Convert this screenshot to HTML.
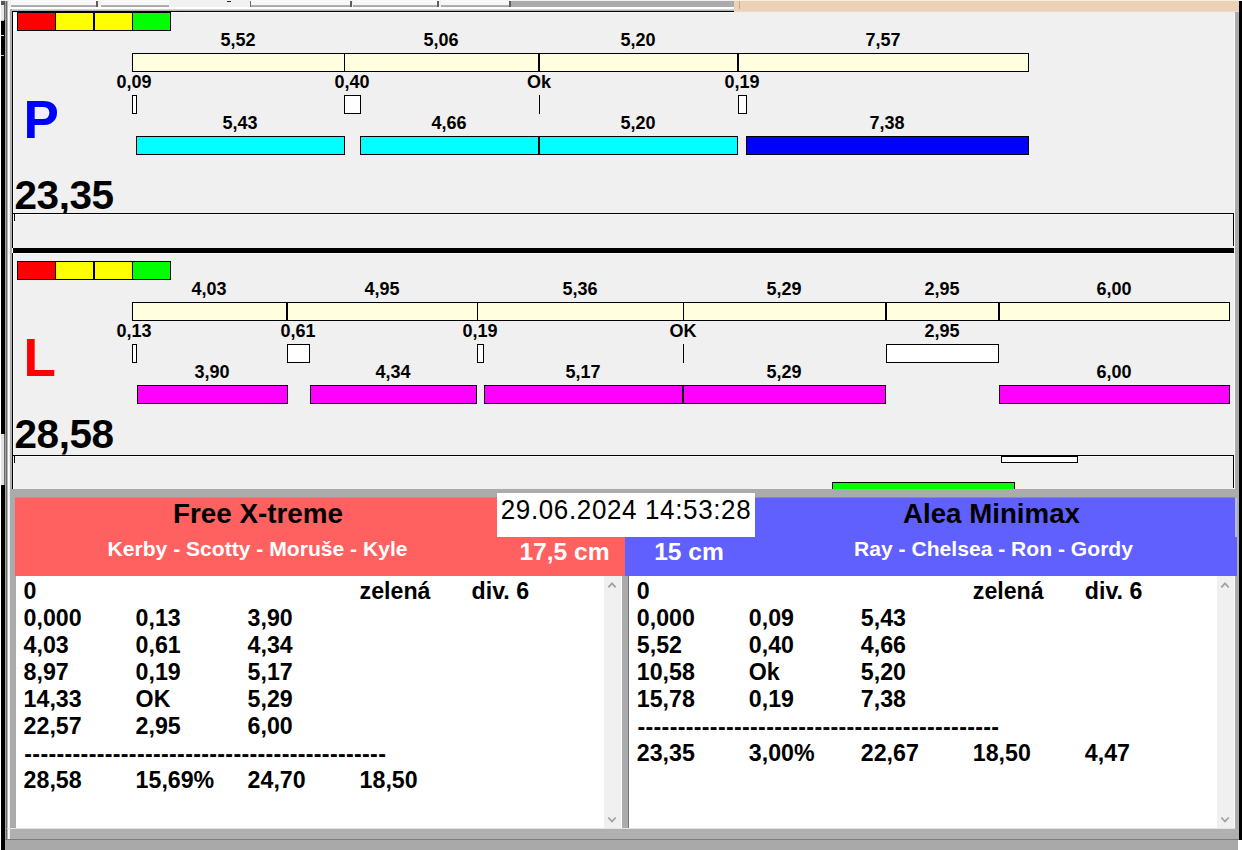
<!DOCTYPE html>
<html><head><meta charset="utf-8"><title>Výsledky</title>
<style>
html,body{margin:0;padding:0;}
body{width:1242px;height:850px;position:relative;overflow:hidden;background:#f0f0f0;font-family:"Liberation Sans", Arial, sans-serif;}
div{box-sizing:content-box;}
</style></head><body>
<div style="position:absolute;left:0px;top:0px;width:1242px;height:850px;background:#f0f0f0;"></div>
<div style="position:absolute;left:0px;top:0px;width:1242px;height:9px;background:#f1f1f1;"></div>
<div style="position:absolute;left:11px;top:0px;width:87px;height:5px;background:#f7f7f7;"></div>
<div style="position:absolute;left:11px;top:1px;width:87px;height:1px;background:#fdfdfd;"></div>
<div style="position:absolute;left:11px;top:5px;width:87px;height:1px;background:#b2b2b2;"></div>
<div style="position:absolute;left:11px;top:6px;width:87px;height:1px;background:#a8a8a8;"></div>
<div style="position:absolute;left:96px;top:1px;width:2px;height:6px;background:#5e5e5e;"></div>
<div style="position:absolute;left:101px;top:0px;width:68px;height:5px;background:#f7f7f7;"></div>
<div style="position:absolute;left:101px;top:1px;width:68px;height:1px;background:#fdfdfd;"></div>
<div style="position:absolute;left:101px;top:5px;width:68px;height:1px;background:#b2b2b2;"></div>
<div style="position:absolute;left:101px;top:6px;width:68px;height:1px;background:#a8a8a8;"></div>
<div style="position:absolute;left:250px;top:0px;width:102px;height:5px;background:#f7f7f7;"></div>
<div style="position:absolute;left:250px;top:1px;width:102px;height:1px;background:#fdfdfd;"></div>
<div style="position:absolute;left:250px;top:5px;width:102px;height:1px;background:#b2b2b2;"></div>
<div style="position:absolute;left:250px;top:6px;width:102px;height:1px;background:#a8a8a8;"></div>
<div style="position:absolute;left:350px;top:1px;width:2px;height:6px;background:#5e5e5e;"></div>
<div style="position:absolute;left:353px;top:0px;width:86px;height:5px;background:#f7f7f7;"></div>
<div style="position:absolute;left:353px;top:1px;width:86px;height:1px;background:#fdfdfd;"></div>
<div style="position:absolute;left:353px;top:5px;width:86px;height:1px;background:#b2b2b2;"></div>
<div style="position:absolute;left:353px;top:6px;width:86px;height:1px;background:#a8a8a8;"></div>
<div style="position:absolute;left:437px;top:1px;width:2px;height:6px;background:#5e5e5e;"></div>
<div style="position:absolute;left:441px;top:0px;width:70px;height:5px;background:#f7f7f7;"></div>
<div style="position:absolute;left:441px;top:1px;width:70px;height:1px;background:#fdfdfd;"></div>
<div style="position:absolute;left:441px;top:5px;width:70px;height:1px;background:#b2b2b2;"></div>
<div style="position:absolute;left:441px;top:6px;width:70px;height:1px;background:#a8a8a8;"></div>
<div style="position:absolute;left:509px;top:1px;width:2px;height:6px;background:#5e5e5e;"></div>
<div style="position:absolute;left:250px;top:1px;width:1px;height:6px;background:#6e6e6e;"></div>
<div style="position:absolute;left:227px;top:1px;width:4px;height:1px;background:#222;"></div>
<div style="position:absolute;left:511px;top:1px;width:223px;height:6px;background:#ababab;"></div>
<div style="position:absolute;left:0px;top:7px;width:734px;height:2px;background:#ffffff;"></div>
<div style="position:absolute;left:10px;top:9px;width:724px;height:1px;background:#d2d2d2;"></div>
<div style="position:absolute;left:10px;top:10px;width:724px;height:1px;background:#b2b2b2;"></div>
<div style="position:absolute;left:734px;top:0;width:505px;height:14px;background:linear-gradient(to bottom,#fffef4 0px,#e6d2bc 1.5px,#eed2b6 4px,#efd0b2 7px,#e9d3be 11px,#f3ece6 12.5px,#f0f0f0 14px);"></div>
<div style="position:absolute;left:739px;top:1px;width:1px;height:8px;background:#c9a98b;"></div>
<div style="position:absolute;left:0px;top:0px;width:1px;height:850px;background:#ffffff;"></div>
<div style="position:absolute;left:1px;top:20px;width:4px;height:830px;background:#000;"></div>
<div style="position:absolute;left:1px;top:0px;width:4px;height:20px;background:#e8e8e8;"></div>
<div style="position:absolute;left:1px;top:1px;width:4px;height:4px;background:#555;"></div>
<div style="position:absolute;left:4px;top:5px;width:1px;height:15px;background:#6a6a6a;"></div>
<div style="position:absolute;left:1px;top:20px;width:3px;height:1px;background:#bbb;"></div>
<div style="position:absolute;left:1px;top:35px;width:3px;height:1px;background:#d8d8d8;"></div>
<div style="position:absolute;left:1px;top:55px;width:3px;height:1px;background:#c8c8c8;"></div>
<div style="position:absolute;left:1px;top:434px;width:3px;height:51px;background:#e2e2e2;"></div>
<div style="position:absolute;left:4px;top:434px;width:1px;height:51px;background:#6a6a6a;"></div>
<div style="position:absolute;left:5px;top:1px;width:1px;height:849px;background:#a0a0a0;"></div>
<div style="position:absolute;left:6px;top:1px;width:1px;height:849px;background:#6e6e6e;"></div>
<div style="position:absolute;left:7px;top:1px;width:1px;height:849px;background:#b4b4b4;"></div>
<div style="position:absolute;left:8px;top:7px;width:1px;height:833px;background:#fff;"></div>
<div style="position:absolute;left:9px;top:7px;width:1px;height:833px;background:#f0f0f0;"></div>
<div style="position:absolute;left:10px;top:9px;width:1px;height:480px;background:#ababab;"></div>
<div style="position:absolute;left:11px;top:9px;width:1px;height:480px;background:#b4b4b4;"></div>
<div style="position:absolute;left:13px;top:12px;width:1px;height:477px;background:#fbfbfb;"></div>
<div style="position:absolute;left:1234px;top:14px;width:1px;height:814px;background:#fff;"></div>
<div style="position:absolute;left:1235px;top:12px;width:4px;height:828px;background:#ababab;"></div>
<div style="position:absolute;left:1239px;top:1px;width:3px;height:839px;background:#000;"></div>
<div style="position:absolute;left:12px;top:11px;width:722px;height:1px;background:#000;"></div>
<div style="position:absolute;left:12px;top:11px;width:1px;height:237px;background:#000;"></div>
<div style="position:absolute;left:1233px;top:213px;width:1px;height:33px;background:#000;"></div>
<div style="position:absolute;left:13px;top:213px;width:1221px;height:1px;background:#000;"></div>
<div style="position:absolute;left:14px;top:214px;width:1px;height:7px;background:#000;"></div>
<div style="position:absolute;left:12px;top:248px;width:1px;height:5px;background:#fff;"></div>
<div style="position:absolute;left:13px;top:248px;width:1221px;height:5px;background:#000;"></div>
<div style="position:absolute;left:12px;top:253px;width:1px;height:236px;background:#000;"></div>
<div style="position:absolute;left:1233px;top:455px;width:1px;height:33px;background:#000;"></div>
<div style="position:absolute;left:13px;top:455px;width:1221px;height:1px;background:#000;"></div>
<div style="position:absolute;left:14px;top:456px;width:1px;height:7px;background:#000;"></div>
<div style="position:absolute;left:13px;top:13px;width:4px;height:18px;background:#fff;"></div>
<div style="position:absolute;left:17px;top:12px;width:154px;height:19px;background:#000;"></div>
<div style="position:absolute;left:18px;top:13px;width:37px;height:17px;background:#ff0000;"></div>
<div style="position:absolute;left:56px;top:13px;width:37px;height:17px;background:#ffff00;"></div>
<div style="position:absolute;left:95px;top:13px;width:37px;height:17px;background:#ffff00;"></div>
<div style="position:absolute;left:133px;top:13px;width:37px;height:17px;background:#00ff00;"></div>
<div style="position:absolute;left:132px;top:53px;width:211px;height:17px;background:#ffffe0;border:1px solid #000;"></div>
<div style="position:absolute;left:88.0px;width:300px;text-align:center;top:29px;font-size:18px;line-height:18px;color:#000;font-weight:bold;white-space:pre;line-height:22px;">5,52</div>
<div style="position:absolute;left:344px;top:53px;width:193px;height:17px;background:#ffffe0;border:1px solid #000;"></div>
<div style="position:absolute;left:291.0px;width:300px;text-align:center;top:29px;font-size:18px;line-height:18px;color:#000;font-weight:bold;white-space:pre;line-height:22px;">5,06</div>
<div style="position:absolute;left:539px;top:53px;width:197px;height:17px;background:#ffffe0;border:1px solid #000;"></div>
<div style="position:absolute;left:488.0px;width:300px;text-align:center;top:29px;font-size:18px;line-height:18px;color:#000;font-weight:bold;white-space:pre;line-height:22px;">5,20</div>
<div style="position:absolute;left:738px;top:53px;width:289px;height:17px;background:#ffffe0;border:1px solid #000;"></div>
<div style="position:absolute;left:733.0px;width:300px;text-align:center;top:29px;font-size:18px;line-height:18px;color:#000;font-weight:bold;white-space:pre;line-height:22px;">7,57</div>
<div style="position:absolute;left:132px;top:95px;width:3px;height:17px;background:#fff;border:1px solid #000;"></div>
<div style="position:absolute;left:-16.0px;width:300px;text-align:center;top:71px;font-size:18px;line-height:18px;color:#000;font-weight:bold;white-space:pre;line-height:22px;">0,09</div>
<div style="position:absolute;left:344px;top:95px;width:15px;height:17px;background:#fff;border:1px solid #000;"></div>
<div style="position:absolute;left:202.0px;width:300px;text-align:center;top:71px;font-size:18px;line-height:18px;color:#000;font-weight:bold;white-space:pre;line-height:22px;">0,40</div>
<div style="position:absolute;left:539px;top:95px;width:1px;height:19px;background:#000;"></div>
<div style="position:absolute;left:389.0px;width:300px;text-align:center;top:71px;font-size:18px;line-height:18px;color:#000;font-weight:bold;white-space:pre;line-height:22px;">Ok</div>
<div style="position:absolute;left:738px;top:95px;width:7px;height:17px;background:#fff;border:1px solid #000;"></div>
<div style="position:absolute;left:592.0px;width:300px;text-align:center;top:71px;font-size:18px;line-height:18px;color:#000;font-weight:bold;white-space:pre;line-height:22px;">0,19</div>
<div style="position:absolute;left:136px;top:136px;width:207px;height:17px;background:#00ffff;border:1px solid #000;"></div>
<div style="position:absolute;left:90.0px;width:300px;text-align:center;top:112px;font-size:18px;line-height:18px;color:#000;font-weight:bold;white-space:pre;line-height:22px;">5,43</div>
<div style="position:absolute;left:360px;top:136px;width:177px;height:17px;background:#00ffff;border:1px solid #000;"></div>
<div style="position:absolute;left:299.0px;width:300px;text-align:center;top:112px;font-size:18px;line-height:18px;color:#000;font-weight:bold;white-space:pre;line-height:22px;">4,66</div>
<div style="position:absolute;left:539px;top:136px;width:197px;height:17px;background:#00ffff;border:1px solid #000;"></div>
<div style="position:absolute;left:488.0px;width:300px;text-align:center;top:112px;font-size:18px;line-height:18px;color:#000;font-weight:bold;white-space:pre;line-height:22px;">5,20</div>
<div style="position:absolute;left:746px;top:136px;width:281px;height:17px;background:#0000ff;border:1px solid #000;"></div>
<div style="position:absolute;left:737.0px;width:300px;text-align:center;top:112px;font-size:18px;line-height:18px;color:#000;font-weight:bold;white-space:pre;line-height:22px;">7,38</div>
<div style="position:absolute;left:17px;top:261px;width:154px;height:19px;background:#000;"></div>
<div style="position:absolute;left:18px;top:262px;width:37px;height:17px;background:#ff0000;"></div>
<div style="position:absolute;left:56px;top:262px;width:37px;height:17px;background:#ffff00;"></div>
<div style="position:absolute;left:95px;top:262px;width:37px;height:17px;background:#ffff00;"></div>
<div style="position:absolute;left:133px;top:262px;width:37px;height:17px;background:#00ff00;"></div>
<div style="position:absolute;left:132px;top:302px;width:153px;height:17px;background:#ffffe0;border:1px solid #000;"></div>
<div style="position:absolute;left:59.0px;width:300px;text-align:center;top:278px;font-size:18px;line-height:18px;color:#000;font-weight:bold;white-space:pre;line-height:22px;">4,03</div>
<div style="position:absolute;left:287px;top:302px;width:189px;height:17px;background:#ffffe0;border:1px solid #000;"></div>
<div style="position:absolute;left:232.0px;width:300px;text-align:center;top:278px;font-size:18px;line-height:18px;color:#000;font-weight:bold;white-space:pre;line-height:22px;">4,95</div>
<div style="position:absolute;left:477px;top:302px;width:205px;height:17px;background:#ffffe0;border:1px solid #000;"></div>
<div style="position:absolute;left:430.0px;width:300px;text-align:center;top:278px;font-size:18px;line-height:18px;color:#000;font-weight:bold;white-space:pre;line-height:22px;">5,36</div>
<div style="position:absolute;left:683px;top:302px;width:201px;height:17px;background:#ffffe0;border:1px solid #000;"></div>
<div style="position:absolute;left:634.0px;width:300px;text-align:center;top:278px;font-size:18px;line-height:18px;color:#000;font-weight:bold;white-space:pre;line-height:22px;">5,29</div>
<div style="position:absolute;left:886px;top:302px;width:111px;height:17px;background:#ffffe0;border:1px solid #000;"></div>
<div style="position:absolute;left:792.0px;width:300px;text-align:center;top:278px;font-size:18px;line-height:18px;color:#000;font-weight:bold;white-space:pre;line-height:22px;">2,95</div>
<div style="position:absolute;left:999px;top:302px;width:229px;height:17px;background:#ffffe0;border:1px solid #000;"></div>
<div style="position:absolute;left:964.0px;width:300px;text-align:center;top:278px;font-size:18px;line-height:18px;color:#000;font-weight:bold;white-space:pre;line-height:22px;">6,00</div>
<div style="position:absolute;left:132px;top:344px;width:3px;height:17px;background:#fff;border:1px solid #000;"></div>
<div style="position:absolute;left:-16.0px;width:300px;text-align:center;top:320px;font-size:18px;line-height:18px;color:#000;font-weight:bold;white-space:pre;line-height:22px;">0,13</div>
<div style="position:absolute;left:287px;top:344px;width:21px;height:17px;background:#fff;border:1px solid #000;"></div>
<div style="position:absolute;left:148.0px;width:300px;text-align:center;top:320px;font-size:18px;line-height:18px;color:#000;font-weight:bold;white-space:pre;line-height:22px;">0,61</div>
<div style="position:absolute;left:477px;top:344px;width:5px;height:17px;background:#fff;border:1px solid #000;"></div>
<div style="position:absolute;left:330.0px;width:300px;text-align:center;top:320px;font-size:18px;line-height:18px;color:#000;font-weight:bold;white-space:pre;line-height:22px;">0,19</div>
<div style="position:absolute;left:683px;top:344px;width:1px;height:19px;background:#000;"></div>
<div style="position:absolute;left:533.0px;width:300px;text-align:center;top:320px;font-size:18px;line-height:18px;color:#000;font-weight:bold;white-space:pre;line-height:22px;">OK</div>
<div style="position:absolute;left:886px;top:344px;width:111px;height:17px;background:#fff;border:1px solid #000;"></div>
<div style="position:absolute;left:792.0px;width:300px;text-align:center;top:320px;font-size:18px;line-height:18px;color:#000;font-weight:bold;white-space:pre;line-height:22px;">2,95</div>
<div style="position:absolute;left:137px;top:385px;width:149px;height:17px;background:#ff00ff;border:1px solid #000;"></div>
<div style="position:absolute;left:62.0px;width:300px;text-align:center;top:361px;font-size:18px;line-height:18px;color:#000;font-weight:bold;white-space:pre;line-height:22px;">3,90</div>
<div style="position:absolute;left:310px;top:385px;width:165px;height:17px;background:#ff00ff;border:1px solid #000;"></div>
<div style="position:absolute;left:243.0px;width:300px;text-align:center;top:361px;font-size:18px;line-height:18px;color:#000;font-weight:bold;white-space:pre;line-height:22px;">4,34</div>
<div style="position:absolute;left:484px;top:385px;width:197px;height:17px;background:#ff00ff;border:1px solid #000;"></div>
<div style="position:absolute;left:433.0px;width:300px;text-align:center;top:361px;font-size:18px;line-height:18px;color:#000;font-weight:bold;white-space:pre;line-height:22px;">5,17</div>
<div style="position:absolute;left:683px;top:385px;width:201px;height:17px;background:#ff00ff;border:1px solid #000;"></div>
<div style="position:absolute;left:634.0px;width:300px;text-align:center;top:361px;font-size:18px;line-height:18px;color:#000;font-weight:bold;white-space:pre;line-height:22px;">5,29</div>
<div style="position:absolute;left:999px;top:385px;width:229px;height:17px;background:#ff00ff;border:1px solid #000;"></div>
<div style="position:absolute;left:964.0px;width:300px;text-align:center;top:361px;font-size:18px;line-height:18px;color:#000;font-weight:bold;white-space:pre;line-height:22px;">6,00</div>
<div style="position:absolute;left:23.5px;top:92px;font-size:53px;line-height:53px;color:#0000ff;font-weight:bold;white-space:pre;line-height:56px;">P</div>
<div style="position:absolute;left:23.5px;top:330px;font-size:53px;line-height:53px;color:#ff0000;font-weight:bold;white-space:pre;line-height:56px;">L</div>
<div style="position:absolute;left:14.5px;top:173px;font-size:40.5px;line-height:40.5px;color:#000;font-weight:bold;white-space:pre;line-height:44px;letter-spacing:-0.45px;">23,35</div>
<div style="position:absolute;left:14.5px;top:412px;font-size:40.5px;line-height:40.5px;color:#000;font-weight:bold;white-space:pre;line-height:44px;letter-spacing:-0.45px;">28,58</div>
<div style="position:absolute;left:14px;top:214px;width:1219px;height:33px;background:#f0f0f0;"></div>
<div style="position:absolute;left:14px;top:456px;width:1219px;height:33px;background:#f0f0f0;"></div>
<div style="position:absolute;left:15px;top:214px;width:1218px;height:1px;background:#fafafa;"></div>
<div style="position:absolute;left:15px;top:456px;width:1218px;height:1px;background:#fafafa;"></div>
<div style="position:absolute;left:14px;top:253px;width:1220px;height:1px;background:#fafafa;"></div>
<div style="position:absolute;left:171px;top:12px;width:563px;height:1px;background:#fafafa;"></div>
<div style="position:absolute;left:14px;top:214px;width:1px;height:7px;background:#000;"></div>
<div style="position:absolute;left:14px;top:456px;width:1px;height:7px;background:#000;"></div>
<div style="position:absolute;left:1001px;top:456px;width:75px;height:5px;background:#fff;border:1px solid #000;"></div>
<div style="position:absolute;left:832px;top:482px;width:181px;height:6px;background:#00ff00;border:1px solid #000;"></div>
<div style="position:absolute;left:10px;top:489px;width:1229px;height:9px;background:#ababab;"></div>
<div style="position:absolute;left:10px;top:498px;width:6px;height:342px;background:#ababab;"></div>
<div style="position:absolute;left:15px;top:498px;width:610px;height:78px;background:#ff6060;"></div>
<div style="position:absolute;left:625px;top:498px;width:610px;height:78px;background:#6060ff;"></div>
<div style="position:absolute;left:1235px;top:498px;width:2px;height:39px;background:#b9b9ea;"></div>
<div style="position:absolute;left:1235px;top:537px;width:2px;height:39px;background:#6060ff;"></div>
<div style="position:absolute;left:15px;top:497px;width:610px;height:1px;background:#d68585;"></div>
<div style="position:absolute;left:625px;top:497px;width:610px;height:1px;background:#8585d6;"></div>
<div style="position:absolute;left:497px;top:493px;width:258px;height:44px;background:#fff;"></div>
<div style="position:absolute;left:476.4px;width:300px;text-align:center;top:495px;font-size:27.2px;line-height:27.2px;color:#000;font-weight:normal;white-space:pre;line-height:30px;letter-spacing:0.68px;transform:scaleX(0.955);">29.06.2024 14:53:28</div>
<div style="position:absolute;left:108px;width:300px;text-align:center;top:498.5px;font-size:27.8px;line-height:27.8px;color:#000;font-weight:bold;white-space:pre;line-height:30px;">Free X-treme</div>
<div style="position:absolute;left:841.5px;width:300px;text-align:center;top:498.5px;font-size:27.7px;line-height:27.7px;color:#000;font-weight:bold;white-space:pre;line-height:30px;">Alea Minimax</div>
<div style="position:absolute;left:107.5px;width:300px;text-align:center;top:537px;font-size:21.1px;line-height:21.1px;color:#fff;font-weight:bold;white-space:pre;line-height:24px;">Kerby - Scotty - Moruše - Kyle</div>
<div style="position:absolute;left:843.5px;width:300px;text-align:center;top:537px;font-size:21.1px;line-height:21.1px;color:#fff;font-weight:bold;white-space:pre;line-height:24px;">Ray - Chelsea - Ron - Gordy</div>
<div style="position:absolute;left:414.5px;width:300px;text-align:center;top:537.5px;font-size:24.6px;line-height:24.6px;color:#fff;font-weight:bold;white-space:pre;line-height:28px;">17,5 cm</div>
<div style="position:absolute;left:539px;width:300px;text-align:center;top:537.5px;font-size:24.6px;line-height:24.6px;color:#fff;font-weight:bold;white-space:pre;line-height:28px;">15 cm</div>
<div style="position:absolute;left:16px;top:576px;width:606px;height:252px;background:#fff;"></div>
<div style="position:absolute;left:604px;top:576px;width:17px;height:252px;background:#f0f0f0;"></div>
<svg style="position:absolute;left:604px;top:576px" width="17" height="252" viewBox="0 0 17 252"><path d="M4.3 11.3 L8 7.3 L11.7 11.3" fill="none" stroke="#a0a0a0" stroke-width="1.8"/><path d="M4.3 241.5 L8 245.5 L11.7 241.5" fill="none" stroke="#a0a0a0" stroke-width="1.8"/></svg>
<div style="position:absolute;left:23.6px;top:578px;font-size:23.2px;line-height:23.2px;color:#000;font-weight:bold;white-space:pre;line-height:27px;">0</div>
<div style="position:absolute;left:359.6px;top:578px;font-size:23.2px;line-height:23.2px;color:#000;font-weight:bold;white-space:pre;line-height:27px;">zelená</div>
<div style="position:absolute;left:471.6px;top:578px;font-size:23.2px;line-height:23.2px;color:#000;font-weight:bold;white-space:pre;line-height:27px;">div. 6</div>
<div style="position:absolute;left:23.6px;top:605px;font-size:23.2px;line-height:23.2px;color:#000;font-weight:bold;white-space:pre;line-height:27px;">0,000</div>
<div style="position:absolute;left:135.6px;top:605px;font-size:23.2px;line-height:23.2px;color:#000;font-weight:bold;white-space:pre;line-height:27px;">0,13</div>
<div style="position:absolute;left:247.6px;top:605px;font-size:23.2px;line-height:23.2px;color:#000;font-weight:bold;white-space:pre;line-height:27px;">3,90</div>
<div style="position:absolute;left:23.6px;top:632px;font-size:23.2px;line-height:23.2px;color:#000;font-weight:bold;white-space:pre;line-height:27px;">4,03</div>
<div style="position:absolute;left:135.6px;top:632px;font-size:23.2px;line-height:23.2px;color:#000;font-weight:bold;white-space:pre;line-height:27px;">0,61</div>
<div style="position:absolute;left:247.6px;top:632px;font-size:23.2px;line-height:23.2px;color:#000;font-weight:bold;white-space:pre;line-height:27px;">4,34</div>
<div style="position:absolute;left:23.6px;top:659px;font-size:23.2px;line-height:23.2px;color:#000;font-weight:bold;white-space:pre;line-height:27px;">8,97</div>
<div style="position:absolute;left:135.6px;top:659px;font-size:23.2px;line-height:23.2px;color:#000;font-weight:bold;white-space:pre;line-height:27px;">0,19</div>
<div style="position:absolute;left:247.6px;top:659px;font-size:23.2px;line-height:23.2px;color:#000;font-weight:bold;white-space:pre;line-height:27px;">5,17</div>
<div style="position:absolute;left:23.6px;top:686px;font-size:23.2px;line-height:23.2px;color:#000;font-weight:bold;white-space:pre;line-height:27px;">14,33</div>
<div style="position:absolute;left:135.6px;top:686px;font-size:23.2px;line-height:23.2px;color:#000;font-weight:bold;white-space:pre;line-height:27px;">OK</div>
<div style="position:absolute;left:247.6px;top:686px;font-size:23.2px;line-height:23.2px;color:#000;font-weight:bold;white-space:pre;line-height:27px;">5,29</div>
<div style="position:absolute;left:23.6px;top:713px;font-size:23.2px;line-height:23.2px;color:#000;font-weight:bold;white-space:pre;line-height:27px;">22,57</div>
<div style="position:absolute;left:135.6px;top:713px;font-size:23.2px;line-height:23.2px;color:#000;font-weight:bold;white-space:pre;line-height:27px;">2,95</div>
<div style="position:absolute;left:247.6px;top:713px;font-size:23.2px;line-height:23.2px;color:#000;font-weight:bold;white-space:pre;line-height:27px;">6,00</div>
<div style="position:absolute;left:24.3px;top:740.5px;font-size:23.2px;line-height:23.2px;color:#000;font-weight:bold;white-space:pre;line-height:27px;letter-spacing:0.32px;">---------------------------------------------</div>
<div style="position:absolute;left:23.6px;top:767px;font-size:23.2px;line-height:23.2px;color:#000;font-weight:bold;white-space:pre;line-height:27px;">28,58</div>
<div style="position:absolute;left:135.6px;top:767px;font-size:23.2px;line-height:23.2px;color:#000;font-weight:bold;white-space:pre;line-height:27px;">15,69%</div>
<div style="position:absolute;left:247.6px;top:767px;font-size:23.2px;line-height:23.2px;color:#000;font-weight:bold;white-space:pre;line-height:27px;">24,70</div>
<div style="position:absolute;left:359.6px;top:767px;font-size:23.2px;line-height:23.2px;color:#000;font-weight:bold;white-space:pre;line-height:27px;">18,50</div>
<div style="position:absolute;left:629px;top:576px;width:606px;height:252px;background:#fff;"></div>
<div style="position:absolute;left:1217px;top:576px;width:17px;height:252px;background:#f0f0f0;"></div>
<svg style="position:absolute;left:1217px;top:576px" width="17" height="252" viewBox="0 0 17 252"><path d="M4.3 11.3 L8 7.3 L11.7 11.3" fill="none" stroke="#a0a0a0" stroke-width="1.8"/><path d="M4.3 241.5 L8 245.5 L11.7 241.5" fill="none" stroke="#a0a0a0" stroke-width="1.8"/></svg>
<div style="position:absolute;left:636.8px;top:578px;font-size:23.2px;line-height:23.2px;color:#000;font-weight:bold;white-space:pre;line-height:27px;">0</div>
<div style="position:absolute;left:972.8px;top:578px;font-size:23.2px;line-height:23.2px;color:#000;font-weight:bold;white-space:pre;line-height:27px;">zelená</div>
<div style="position:absolute;left:1084.8px;top:578px;font-size:23.2px;line-height:23.2px;color:#000;font-weight:bold;white-space:pre;line-height:27px;">div. 6</div>
<div style="position:absolute;left:636.8px;top:605px;font-size:23.2px;line-height:23.2px;color:#000;font-weight:bold;white-space:pre;line-height:27px;">0,000</div>
<div style="position:absolute;left:748.8px;top:605px;font-size:23.2px;line-height:23.2px;color:#000;font-weight:bold;white-space:pre;line-height:27px;">0,09</div>
<div style="position:absolute;left:860.8px;top:605px;font-size:23.2px;line-height:23.2px;color:#000;font-weight:bold;white-space:pre;line-height:27px;">5,43</div>
<div style="position:absolute;left:636.8px;top:632px;font-size:23.2px;line-height:23.2px;color:#000;font-weight:bold;white-space:pre;line-height:27px;">5,52</div>
<div style="position:absolute;left:748.8px;top:632px;font-size:23.2px;line-height:23.2px;color:#000;font-weight:bold;white-space:pre;line-height:27px;">0,40</div>
<div style="position:absolute;left:860.8px;top:632px;font-size:23.2px;line-height:23.2px;color:#000;font-weight:bold;white-space:pre;line-height:27px;">4,66</div>
<div style="position:absolute;left:636.8px;top:659px;font-size:23.2px;line-height:23.2px;color:#000;font-weight:bold;white-space:pre;line-height:27px;">10,58</div>
<div style="position:absolute;left:748.8px;top:659px;font-size:23.2px;line-height:23.2px;color:#000;font-weight:bold;white-space:pre;line-height:27px;">Ok</div>
<div style="position:absolute;left:860.8px;top:659px;font-size:23.2px;line-height:23.2px;color:#000;font-weight:bold;white-space:pre;line-height:27px;">5,20</div>
<div style="position:absolute;left:636.8px;top:686px;font-size:23.2px;line-height:23.2px;color:#000;font-weight:bold;white-space:pre;line-height:27px;">15,78</div>
<div style="position:absolute;left:748.8px;top:686px;font-size:23.2px;line-height:23.2px;color:#000;font-weight:bold;white-space:pre;line-height:27px;">0,19</div>
<div style="position:absolute;left:860.8px;top:686px;font-size:23.2px;line-height:23.2px;color:#000;font-weight:bold;white-space:pre;line-height:27px;">7,38</div>
<div style="position:absolute;left:637.5px;top:713.5px;font-size:23.2px;line-height:23.2px;color:#000;font-weight:bold;white-space:pre;line-height:27px;letter-spacing:0.32px;">---------------------------------------------</div>
<div style="position:absolute;left:636.8px;top:740px;font-size:23.2px;line-height:23.2px;color:#000;font-weight:bold;white-space:pre;line-height:27px;">23,35</div>
<div style="position:absolute;left:748.8px;top:740px;font-size:23.2px;line-height:23.2px;color:#000;font-weight:bold;white-space:pre;line-height:27px;">3,00%</div>
<div style="position:absolute;left:860.8px;top:740px;font-size:23.2px;line-height:23.2px;color:#000;font-weight:bold;white-space:pre;line-height:27px;">22,67</div>
<div style="position:absolute;left:972.8px;top:740px;font-size:23.2px;line-height:23.2px;color:#000;font-weight:bold;white-space:pre;line-height:27px;">18,50</div>
<div style="position:absolute;left:1084.8px;top:740px;font-size:23.2px;line-height:23.2px;color:#000;font-weight:bold;white-space:pre;line-height:27px;">4,47</div>
<div style="position:absolute;left:622px;top:576px;width:6px;height:252px;background:#ababab;"></div>
<div style="position:absolute;left:628px;top:576px;width:1px;height:252px;background:#757575;"></div>
<div style="position:absolute;left:7px;top:828px;width:1228px;height:1px;background:#e4e4e4;"></div>
<div style="position:absolute;left:10px;top:829px;width:1229px;height:10px;background:#b0b0b0;"></div>
<div style="position:absolute;left:5px;top:839px;width:1234px;height:1px;background:#7d7d7d;"></div>
<div style="position:absolute;left:5px;top:840px;width:1233px;height:10px;background:#a9a9a9;"></div>
<div style="position:absolute;left:1238px;top:840px;width:4px;height:10px;background:#fff;"></div>
</body></html>
